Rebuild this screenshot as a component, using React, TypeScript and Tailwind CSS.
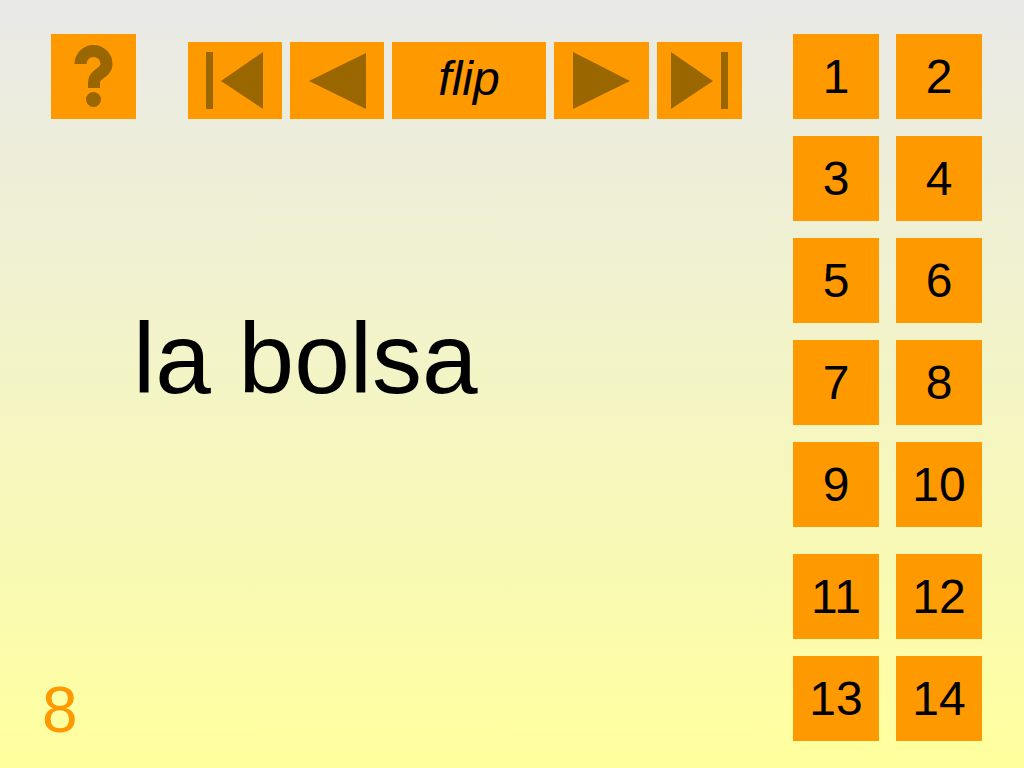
import React from "react";

const font = { fontFamily: '"Liberation Sans", Arial, sans-serif' };

// brown glyph colour used on the orange buttons
const GLYPH = "#996600";

function NavButton({ width, children }: { width: string; children: React.ReactNode }) {
  return (
    <div className={`${width} h-[77px] bg-[#ff9900] flex items-center justify-center`}>
      {children}
    </div>
  );
}

export default function App() {
  const numbers = [
    [1, 2],
    [3, 4],
    [5, 6],
    [7, 8],
    [9, 10],
    [11, 12],
    [13, 14],
  ];

  return (
    <div
      className="w-[1024px] h-[768px] flex bg-gradient-to-b from-[#e9e9e7] to-[#ffff9d] overflow-hidden"
      style={font}
    >
      {/* Left side: toolbar, word, card number */}
      <div className="flex-1 flex flex-col pt-[34px]">
        <div className="flex items-start">
          {/* Help button */}
          <div className="ml-[51px] w-[85px] h-[85px] bg-[#ff9900]">
            <svg width="85" height="85" viewBox="0 0 85 85">
              <path
                d="M29.5 30 A13 13 0 0 1 55.5 30 C55.5 39 43 40 43 48 L43 54"
                fill="none"
                stroke={GLYPH}
                strokeWidth="12"
              />
              <circle cx="42.5" cy="65.5" r="7.5" fill={GLYPH} />
            </svg>
          </div>

          {/* Navigation */}
          <div className="ml-[52px] mt-[8px] flex gap-2">
            <NavButton width="w-[94px]">
              <svg width="94" height="77" viewBox="0 0 94 77">
                <rect x="18" y="10" width="7" height="57" fill={GLYPH} />
                <polygon points="33,39 75,10 75,67" fill={GLYPH} />
              </svg>
            </NavButton>
            <NavButton width="w-[94px]">
              <svg width="94" height="77" viewBox="0 0 94 77">
                <polygon points="19,39 76,11 76,67" fill={GLYPH} />
              </svg>
            </NavButton>
            <NavButton width="w-[154px]">
              <span className="text-[48px] italic leading-none text-black pb-[4px]">flip</span>
            </NavButton>
            <NavButton width="w-[95px]">
              <svg width="95" height="77" viewBox="0 0 95 77">
                <polygon points="19,10 19,67 76,39" fill={GLYPH} />
              </svg>
            </NavButton>
            <NavButton width="w-[85px]">
              <svg width="85" height="77" viewBox="0 0 85 77">
                <polygon points="14,10 14,67 56,39" fill={GLYPH} />
                <rect x="64" y="10" width="7" height="57" fill={GLYPH} />
              </svg>
            </NavButton>
          </div>
        </div>

        <div className="ml-[133px] mt-[189px] text-[100px] leading-none text-black">la bolsa</div>

        <div className="ml-[42px] mt-auto mb-[26px] text-[64px] leading-none text-[#ff9900]">8</div>
      </div>

      {/* Right side: card index */}
      <div className="w-[189px] mr-[42px] pt-[34px] flex flex-col gap-[17px]">
        {numbers.map((row, i) => (
          <div key={i} className={`flex gap-[17px] ${i === 5 ? "mt-[10px]" : ""}`}>
            {row.map((n) => (
              <div
                key={n}
                className="w-[86px] h-[85px] bg-[#ff9900] flex items-center justify-center text-[48px] leading-none text-black"
              >
                {n}
              </div>
            ))}
          </div>
        ))}
      </div>
    </div>
  );
}
